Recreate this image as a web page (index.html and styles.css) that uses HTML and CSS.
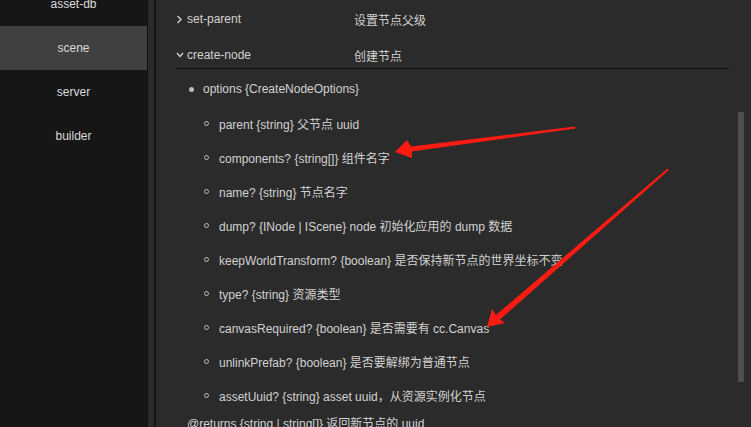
FILE: index.html
```html
<!DOCTYPE html>
<html>
<head>
    <title>Scene Messages</title>
    <link rel="stylesheet" href="styles.css">
  </head>

  <body>
    <div class="page">
      <div class="sidebar">
        <div class="menu-item">asset-db</div>
        <div class="menu-item active">scene</div>
        <div class="menu-item">server</div>
        <div class="menu-item">builder</div>
      </div>

      <div class="divider"></div>

      <div class="main">
        <div class="content">
          <div class="msg-row">
            <span class="chevron">
              <svg width="7" height="9" viewBox="0 0 7 9"><path d="M1.5 1 L5 4.5 L1.5 8" fill="none" stroke="#d0d0d0" stroke-width="1.4"/></svg>
            </span>
            <span class="msg-name">set-parent</span>
            <span class="msg-desc">设置节点父级</span>
          </div>

          <div class="msg-row open">
            <span class="chevron">
              <svg width="8" height="6" viewBox="0 0 8 6"><path d="M1 1 L4 4.5 L7 1" fill="none" stroke="#d0d0d0" stroke-width="1.4"/></svg>
            </span>
            <span class="msg-name">create-node</span>
            <span class="msg-desc">创建节点</span>
          </div>

          <ul class="params">
            <li class="param">
              <div class="param-line"><span class="dot"></span>options {CreateNodeOptions}</div>
              <ul class="sub-params">
                <li><span class="ring"></span>parent {string} 父节点 uuid</li>
                <li><span class="ring"></span>components? {string[]} 组件名字</li>
                <li><span class="ring"></span>name? {string} 节点名字</li>
                <li><span class="ring"></span>dump? {INode | IScene} node 初始化应用的 dump 数据</li>
                <li><span class="ring"></span>keepWorldTransform? {boolean} 是否保持新节点的世界坐标不变</li>
                <li><span class="ring"></span>type? {string} 资源类型</li>
                <li><span class="ring"></span>canvasRequired? {boolean} 是否需要有 cc.Canvas</li>
                <li><span class="ring"></span>unlinkPrefab? {boolean} 是否要解绑为普通节点</li>
                <li><span class="ring"></span>assetUuid? {string} asset uuid，从资源实例化节点</li>
              </ul>
            </li>
          </ul>

          <p class="returns">@returns {string | string[]} 返回新节点的 uuid</p>
        </div>

        <div class="scroll-track">
          <div class="scroll-thumb"></div>
        </div>
      </div>

      <!-- red annotation arrows drawn over the screenshot -->
      <svg class="arrows" width="751" height="427" viewBox="0 0 751 427">
        <polygon points="575,126.5 411,146.5 407,140 395,152 412,158 412,151.5 575.5,128.5" fill="#fa1b12"/>
        <polygon points="667.5,168.5 496,315 492,309 487,327 505,323 500,319.5 669,170" fill="#fa1b12"/>
      </svg>
    </div>
  </body>
</html>
```

FILE: styles.css
```css
 body {
   margin: 0;
   padding: 0;
   background-color: #2b2b2b;
   font-family: "Liberation Sans", Arial, "Noto Sans CJK SC", sans-serif;
   font-size: 12px;
 }

 .page {
   position: relative;
   display: flex;
   height: 427px;
   overflow: hidden;
 }

 .sidebar {
   width: 147px;
   flex-shrink: 0;
   background-color: #161616;
   padding-top: 0;
 }

 .menu-item {
   height: 44px;
   line-height: 44px;
   text-align: center;
   color: #dcdcdc;
 }

 .menu-item:first-child {
   margin-top: -18px;
 }

 .menu-item.active {
   background-color: #404040;
 }

 .divider {
   width: 6px;
   flex-shrink: 0;
   background-color: #2a2a2a;
   border-left: 1px solid #111;
   border-right: 2px solid #141414;
 }

 .main {
   flex: 1;
   display: flex;
   background-color: #2b2b2b;
 }

 .content {
   flex: 1;
   padding-left: 20px;
   padding-right: 9px;
   color: #d2d2d2;
 }

 .msg-row {
   display: flex;
   align-items: center;
   height: 26px;
   margin-top: 6px;
 }

 .msg-row.open {
   margin-top: 10px;
   border-bottom: 1px solid #0d0d0d;
 }

 .chevron {
   width: 11px;
   display: flex;
   align-items: center;
 }

 .msg-name {
   width: 167px;
 }

 .params {
   list-style: none;
   margin: 11px 0 0 0;
   padding: 0 0 0 13px;
 }

 .param-line {
   display: flex;
   align-items: center;
   height: 18px;
 }

 .dot {
   width: 5px;
   height: 5px;
   border-radius: 50%;
   background-color: #bdbdbd;
   margin-right: 9px;
 }

 .sub-params {
   list-style: none;
   margin: 1px 0 0 0;
   padding: 0 0 0 15px;
 }

 .sub-params li {
   display: flex;
   align-items: center;
   height: 18px;
   margin-top: 16px;
   white-space: nowrap;
 }

 .ring {
   width: 3px;
   height: 3px;
   border-radius: 50%;
   border: 1px solid #bdbdbd;
   margin-right: 10px;
 }

 .returns {
   margin: 11px 0 0 11px;
   line-height: 18px;
 }

 .scroll-track {
   width: 6px;
   margin-right: 7px;
 }

 .scroll-thumb {
   margin-top: 112px;
   height: 270px;
   background-color: #4f4f4f;
 }

 .arrows {
   position: absolute;
   top: 0;
   left: 0;
   pointer-events: none;
 }
```
